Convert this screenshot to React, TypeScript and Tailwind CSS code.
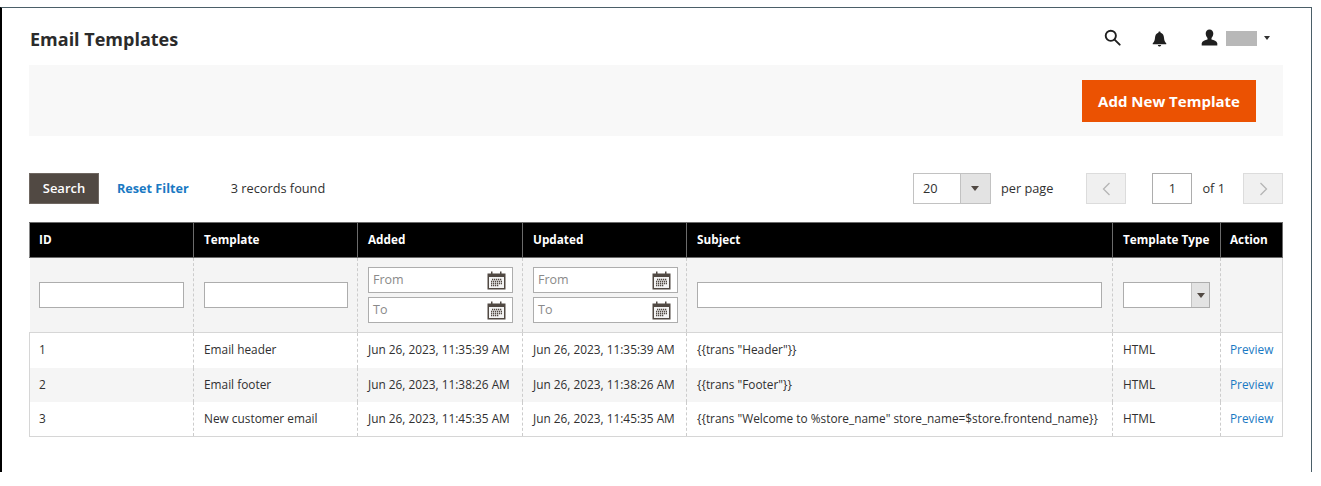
const font = { fontFamily: '"Open Sans", sans-serif' };

function CalendarIcon() {
  return (
    <svg width="19" height="19" viewBox="0 0 19 19" className="shrink-0">
      <rect x="0.5" y="2.5" width="18" height="16" fill="#514943" />
      <rect x="2" y="6" width="15" height="11" fill="#f4f4f4" />
      <rect x="4" y="0.5" width="1.5" height="4" fill="#514943" />
      <rect x="13" y="0.5" width="1.5" height="4" fill="#514943" />
      <path d="M5 8.5h10M4 10.500h11M4 12.500h11M4 14.500h8" stroke="#514943" strokeWidth="1.300" strokeDasharray="1.300 0.700" />
    </svg>
  );
}

function DateInput({ label }: { label: string }) {
  return (
    <div className="flex h-[26px] w-[145px] items-center justify-between border border-[#adadad] bg-white pl-[4px] pr-[6px] text-[12.5px] text-[#8a8a8a]">
      <span>{label}</span>
      <CalendarIcon />
    </div>
  );
}

function DateRange() {
  return (
    <div className="flex flex-col gap-[4px]">
      <DateInput label="From" />
      <DateInput label="To" />
    </div>
  );
}

function TextInput({ className }: { className: string }) {
  return <div className={`h-[26px] border border-[#adadad] bg-white ${className}`} />;
}

const headers = ['ID', 'Template', 'Added', 'Updated', 'Subject', 'Template Type', 'Action'];
const widths = [164, 164, 165, 164, 426, 108, 62];

const rows = [
  ['1', 'Email header', 'Jun 26, 2023, 11:35:39 AM', '{{trans "Header"}}'],
  ['2', 'Email footer', 'Jun 26, 2023, 11:38:26 AM', '{{trans "Footer"}}'],
  ['3', 'New customer email', 'Jun 26, 2023, 11:45:35 AM', '{{trans "Welcome to %store_name" store_name=$store.frontend_name}}'],
];

const dashed = 'border-r border-dashed border-r-[#cccccc]';

export default function App() {
  return (
    <div className="h-[486px] overflow-hidden bg-white pt-[7px] text-[#303030]" style={font}>
      <div className="h-[465px] w-[1312px] border-t border-r border-l-2 border-t-[#4b5f68] border-r-[#4b5f68] border-l-black pl-[27px] pr-[28px]">
        {/* Header */}
        <div className="flex h-[57px] items-center justify-between">
          <h1 className="ml-[1px] mt-[6px] text-[18px] font-bold text-[#2b2b2b]">Email Templates</h1>
          <div className="flex items-center pr-[13px]">
            <svg width="17" height="17" viewBox="0 0 18 18" fill="none" stroke="#1f1f1f" strokeWidth="2" className="mt-[1px]">
              <circle cx="7.2" cy="7.2" r="5.4" />
              <path d="M11.2 11.2l5.4 5.4" strokeLinecap="round" />
            </svg>
            <svg width="15" height="18" viewBox="0 0 16 18" fill="#1f1f1f" className="ml-[31px] mr-[1px] mt-[4px]">
              <path d="M8 1c.8 0 1.2.5 1.2 1.2C11.6 2.9 12.6 5 12.8 7.6c.2 2.7.9 4.3 2.4 5.9v1H.8v-1c1.5-1.6 2.2-3.2 2.4-5.9C3.400 5 4.400 2.900 6.800 2.200 6.800 1.500 7.200 1 8 1z" />
              <path d="M6.200 15.300h3.600c-.2 1-.9 1.600-1.800 1.600s-1.600-.6-1.800-1.600z" />
            </svg>
            <svg width="17" height="17" viewBox="0 0 17 17" fill="#1f1f1f" className="ml-[33px] mt-[2px]">
              <path d="M8.500 0.500c2.400 0 3.800 1.700 3.800 4 0 1.900-.8 3.500-1.800 4.400v1.700c2.300.8 5.300 1.600 5.800 3.600v2.300H.700v-2.300c.5-2 3.500-2.800 5.800-3.600V8.900c-1-.9-1.800-2.500-1.800-4.400 0-2.300 1.400-4 3.800-4z" />
            </svg>
            <div className="ml-[8px] mt-[3px] h-[15px] w-[31px] bg-[#b8b8b8]" />
            <div className="ml-[7px] mt-[3px] h-0 w-0 border-x-[3.500px] border-t-[4px] border-x-transparent border-t-[#303030]" />
          </div>
        </div>

        {/* Actions bar */}
        <div className="flex h-[71px] items-start justify-end bg-[#f8f8f8] pr-[27px] pt-[15px]">
          <button className="h-[42px] w-[174px] bg-[#eb5202] text-[15px] font-bold text-white">Add New Template</button>
        </div>

        {/* Toolbar */}
        <div className="mt-[37px] flex h-[31px] items-center text-[12.75px]">
          <button className="h-[31px] w-[70px] border border-[#6f6761] bg-[#514943] text-[13px] font-semibold text-white">Search</button>
          <a className="ml-[18px] text-[12.65px] font-bold text-[#1979c3]">Reset Filter</a>
          <span className="ml-[42px] text-[#303030]">3 records found</span>
          <div className="ml-auto flex items-center">
            <div className="flex h-[31px] w-[78px] border border-[#c2c2c2]">
              <span className="flex flex-1 items-center pl-[9px]">20</span>
              <span className="flex w-[30px] items-center justify-center border-l border-[#c2c2c2] bg-[#e3e3e3]">
                <span className="h-0 w-0 border-x-[4px] border-t-[5px] border-x-transparent border-t-[#514943]" />
              </span>
            </div>
            <span className="ml-[10px]">per page</span>
            <div className="ml-[33px] flex h-[31px] w-[40px] items-center justify-center border border-[#dcdcdc] bg-[#f0f0f0]">
              <svg width="9" height="14" viewBox="0 0 9 14" fill="none" stroke="#b5b5b5" strokeWidth="1.300"><path d="M7.500 1L1.500 7l6 6" /></svg>
            </div>
            <div className="ml-[26px] flex h-[31px] w-[40px] items-center justify-center border border-[#adadad]">1</div>
            <span className="ml-[10px]">of 1</span>
            <div className="ml-[18px] flex h-[31px] w-[40px] items-center justify-center border border-[#dcdcdc] bg-[#f0f0f0]">
              <svg width="9" height="14" viewBox="0 0 9 14" fill="none" stroke="#b5b5b5" strokeWidth="1.300"><path d="M1.500 1l6 6-6 6" /></svg>
            </div>
          </div>
        </div>

        {/* Grid */}
        <table className="mt-[18px] w-[1253px] table-fixed border-collapse text-[11.85px]">
          <colgroup>
            {widths.map((w, i) => (
              <col key={i} style={{ width: w }} />
            ))}
          </colgroup>
          <thead>
            <tr className="h-[35px] bg-black text-left text-white">
              {headers.map((h) => (
                <th key={h} className="whitespace-nowrap border border-[#6b6b6b] pl-[10px] text-[11.75px] font-bold first:border-l-[#8a8a8a] first:pl-[9px] last:pl-[9px]">
                  {h}
                </th>
              ))}
            </tr>
            <tr className="h-[75px] bg-[#f4f4f4]">
              <td className={`pl-[9px] ${dashed}`}><TextInput className="w-[145px]" /></td>
              <td className={`pl-[10px] ${dashed}`}><TextInput className="w-[144px]" /></td>
              <td className={`pl-[10px] ${dashed}`}><DateRange /></td>
              <td className={`pl-[10px] ${dashed}`}><DateRange /></td>
              <td className={`pl-[10px] ${dashed}`}><TextInput className="w-[405px]" /></td>
              <td className={`pl-[10px] ${dashed}`}>
                <div className="flex h-[26px] w-[87px] border border-[#adadad] bg-white">
                  <span className="flex-1" />
                  <span className="flex w-[18px] items-center justify-center border-l border-[#c2c2c2] bg-[#e3e3e3]">
                    <span className="h-0 w-0 border-x-[4px] border-t-[5px] border-x-transparent border-t-[#514943]" />
                  </span>
                </div>
              </td>
              <td className="border-r border-[#d6d6d6]" />
            </tr>
          </thead>
          <tbody className="border border-[#d6d6d6]">
            {rows.map((r, i) => (
              <tr key={r[0]} className={i === 1 ? 'h-[34px] bg-[#f5f5f5]' : 'h-[35px] bg-white'}>
                <td className={`pl-[9px] ${dashed}`}>{r[0]}</td>
                <td className={`pl-[10px] ${dashed}`}>{r[1]}</td>
                <td className={`whitespace-nowrap pl-[10px] ${dashed}`}>{r[2]}</td>
                <td className={`whitespace-nowrap pl-[10px] ${dashed}`}>{r[2]}</td>
                <td className={`whitespace-nowrap pl-[10px] ${dashed}`}>{r[3]}</td>
                <td className={`pl-[10px] ${dashed}`}>HTML</td>
                <td className="pl-[9px] text-[#1979c3]">Preview</td>
              </tr>
            ))}
          </tbody>
        </table>
      </div>
    </div>
  );
}
